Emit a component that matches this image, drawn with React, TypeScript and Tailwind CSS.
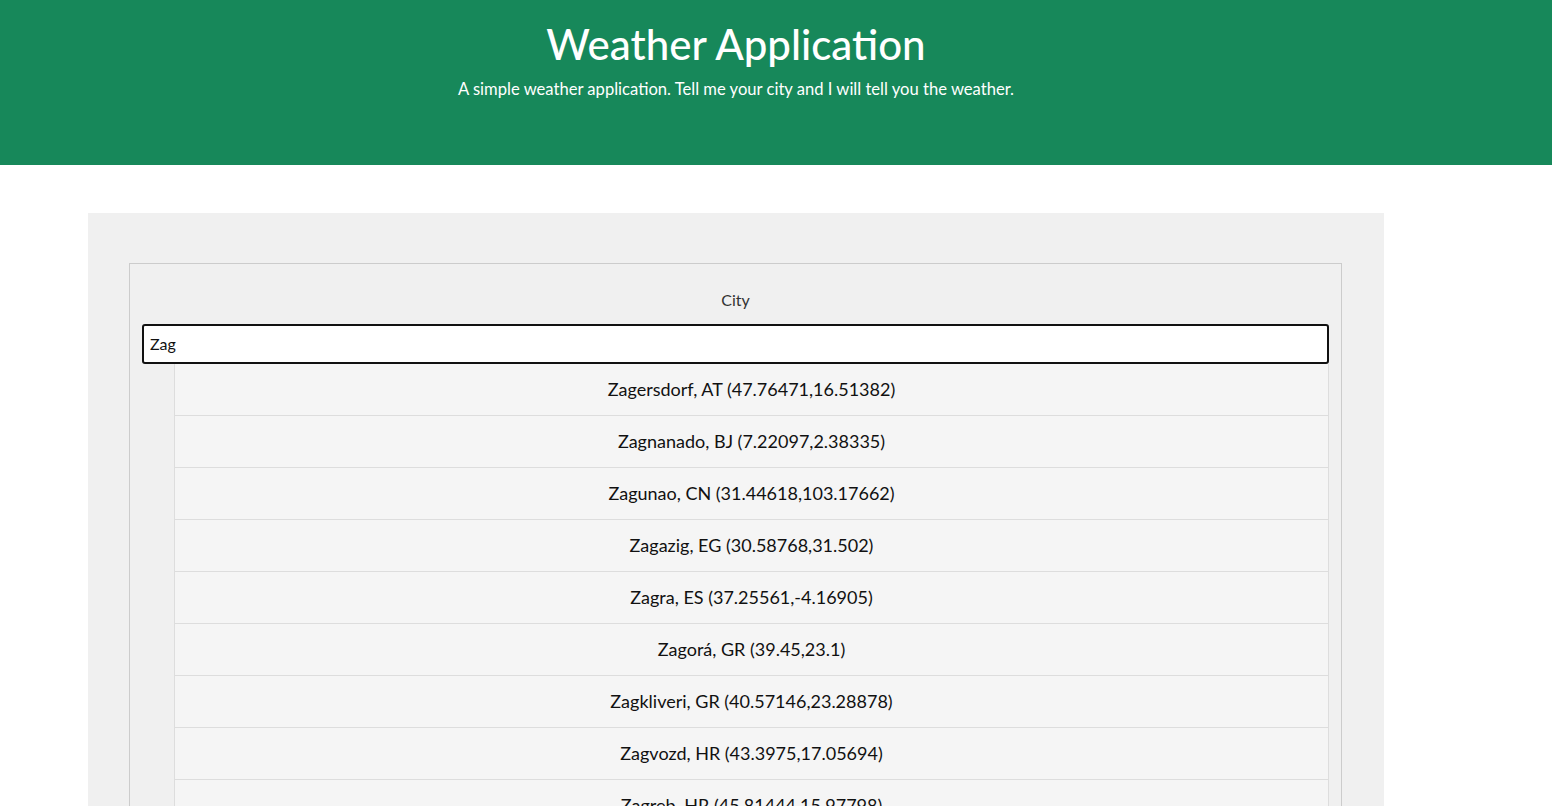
import React, { useState } from 'react';

const CITIES = [
  'Zagersdorf, AT (47.76471,16.51382)',
  'Zagnanado, BJ (7.22097,2.38335)',
  'Zagunao, CN (31.44618,103.17662)',
  'Zagazig, EG (30.58768,31.502)',
  'Zagra, ES (37.25561,-4.16905)',
  'Zagorá, GR (39.45,23.1)',
  'Zagkliveri, GR (40.57146,23.28878)',
  'Zagvozd, HR (43.3975,17.05694)',
  'Zagreb, HR (45.81444,15.97798)',
  'Zagorje, HR (45.08306,15.06417)',
];

export default function App() {
  const [query, setQuery] = useState('Zag');

  return (
    <div className="min-h-screen bg-white font-['Lato','Noto_Sans',sans-serif] text-[#111]">
      <header className="h-[165px] bg-[#17885a] text-white">
        <div className="ml-[88px] w-[1296px] pt-[17px] text-center">
          <h1 className="text-[42px] leading-[54px] font-medium">Weather Application</h1>
          <p className="mt-[7px] text-[16.6px] leading-[22px]">
            A simple weather application. Tell me your city and I will tell you the weather.
          </p>
        </div>
      </header>

      <main className="ml-[88px] mt-[48px] w-[1296px] bg-[#f0f0f0] pl-[41px] pr-[42px] pt-[50px] pb-10">
        <fieldset className="border border-[#cccccc] px-[12px] pt-[24px] pb-4">
          <label htmlFor="city" className="block text-center text-[16px] leading-[24px] text-[#333]">
            City
          </label>
          <input
            id="city"
            value={query}
            onChange={(e) => setQuery(e.target.value)}
            className="mt-[12px] block h-[40px] w-full rounded-[3px] border-2 border-[#111] bg-white px-[6px] pb-[2px] text-[16px] text-[#111] outline-none"
          />
          <ul className="ml-[32px] border-x border-[#dddddd]">
            {CITIES.map((city) => (
              <li
                key={city}
                className="h-[52px] flex items-center justify-center border-b border-[#dddddd] bg-[#f5f5f5] text-[18px] text-[#111] last:border-b-0"
              >
                {city}
              </li>
            ))}
          </ul>
        </fieldset>
      </main>
    </div>
  );
}
